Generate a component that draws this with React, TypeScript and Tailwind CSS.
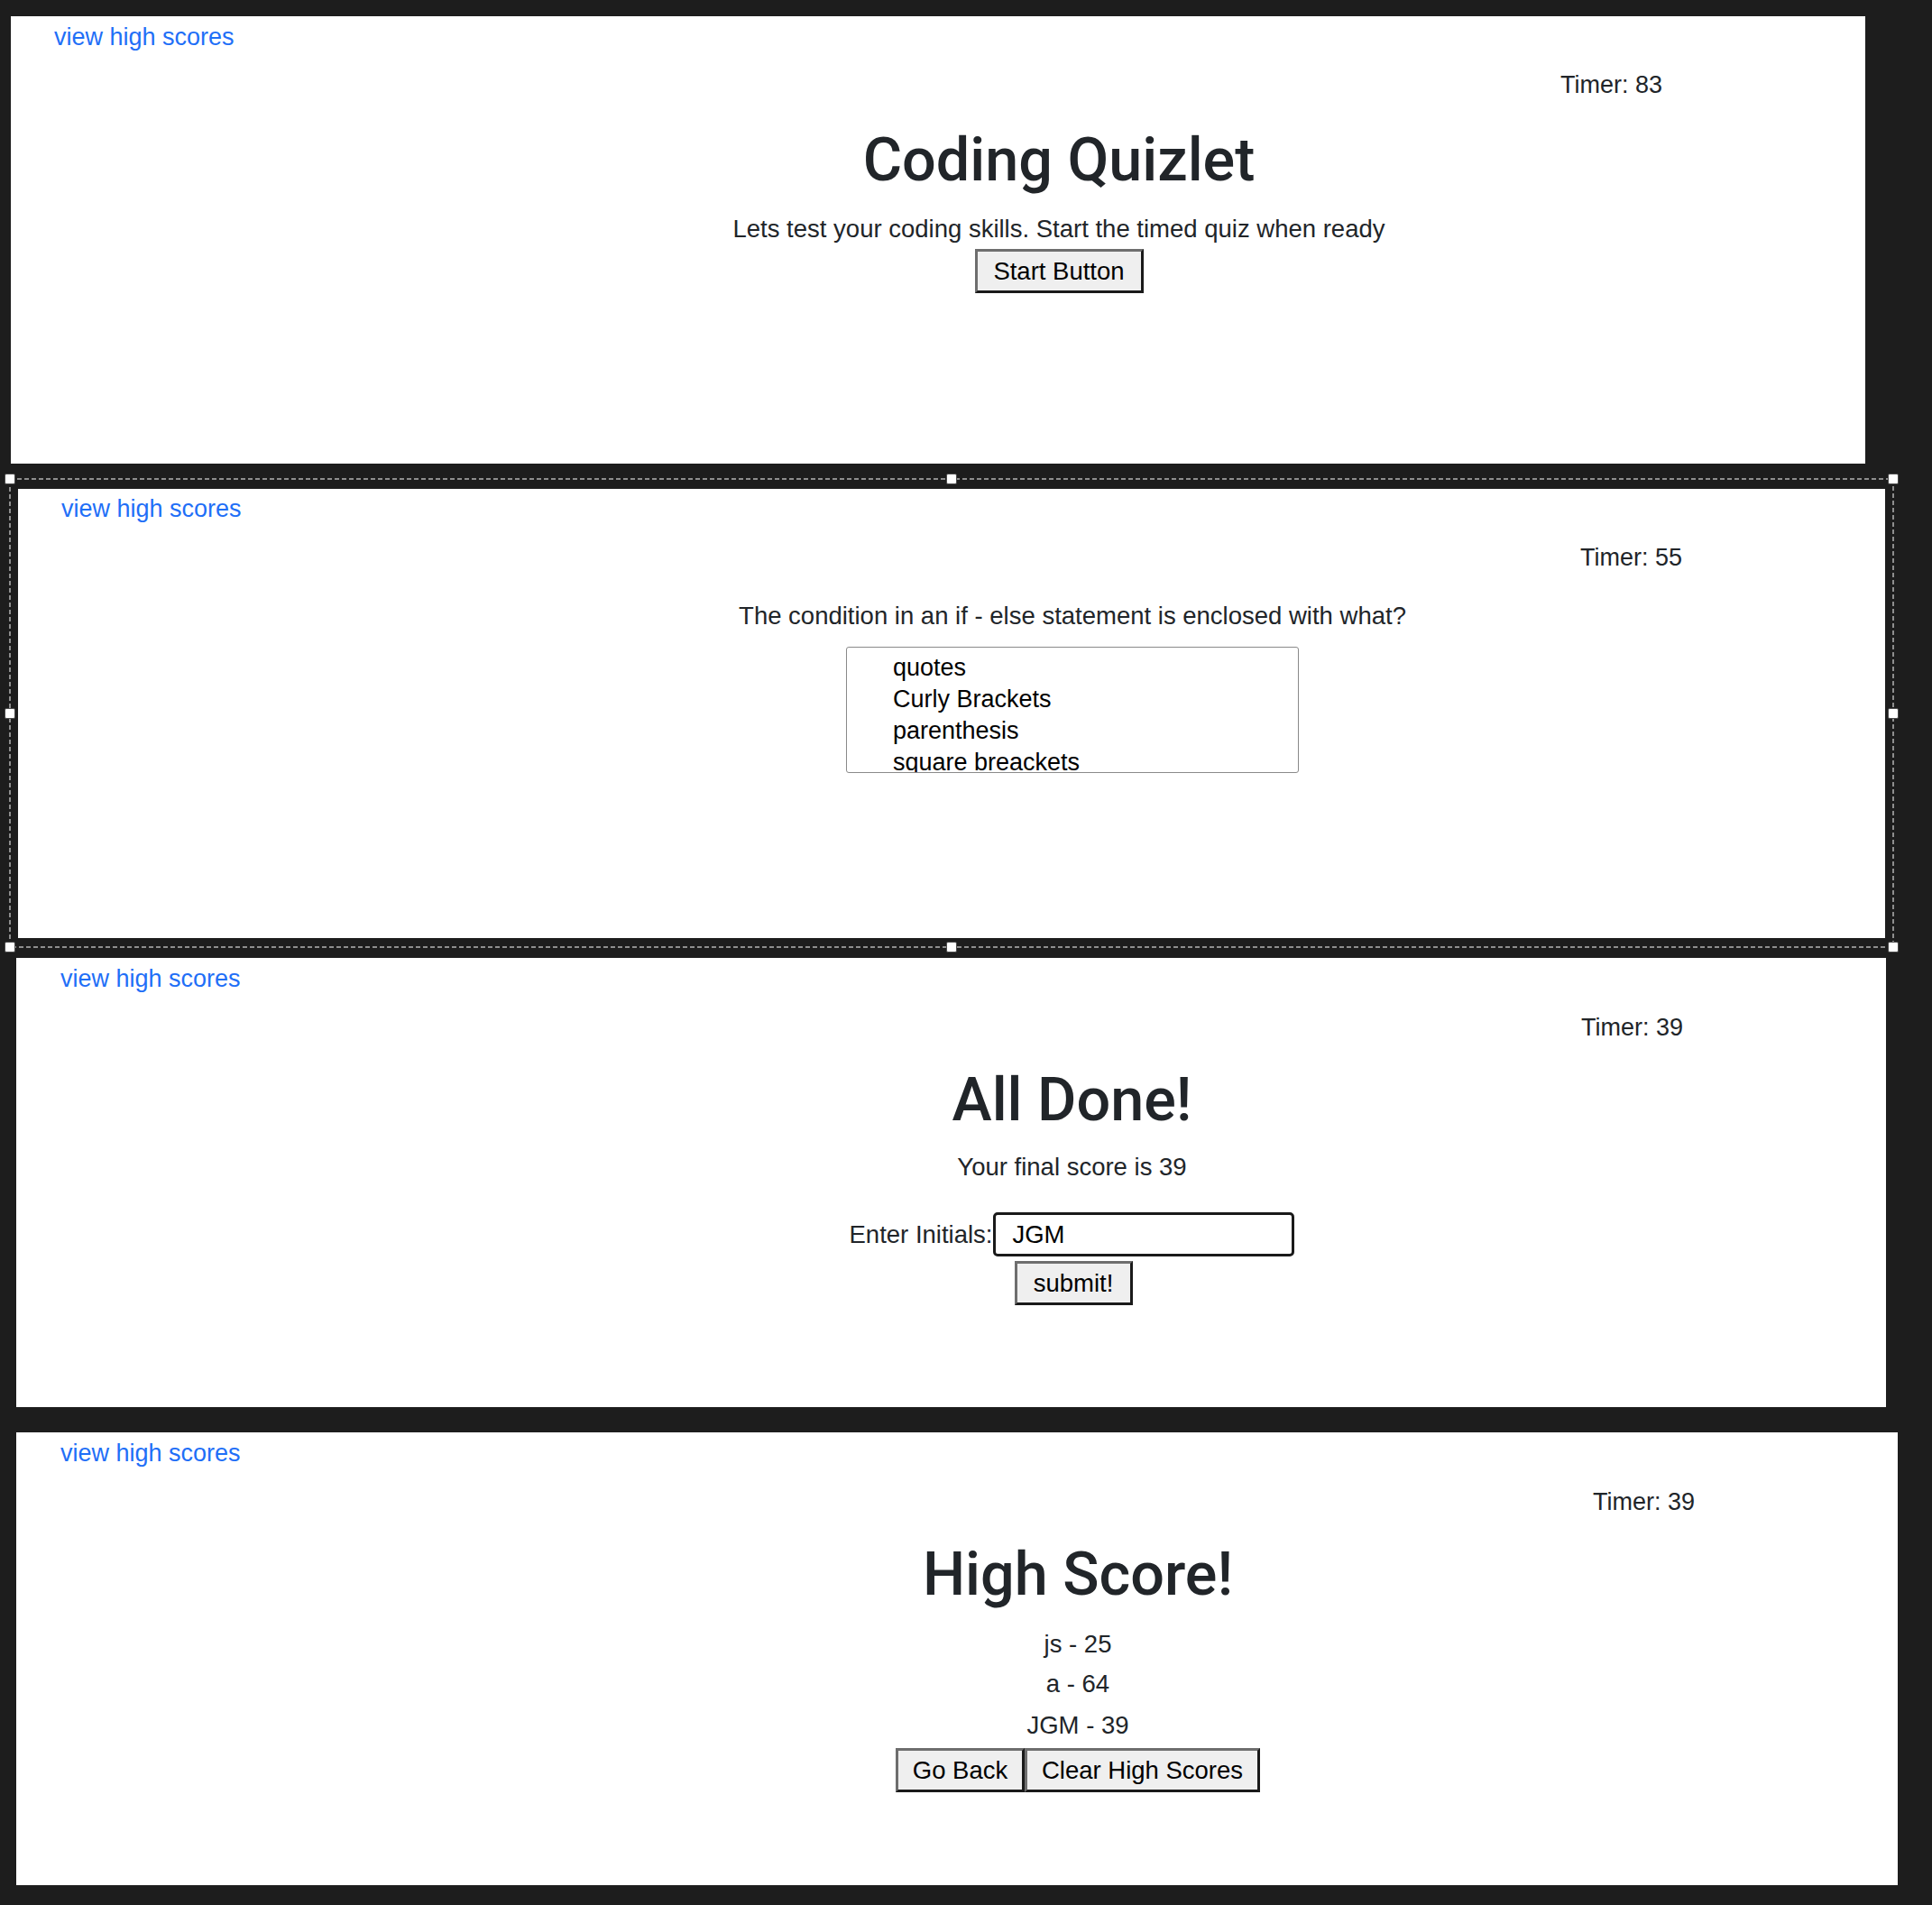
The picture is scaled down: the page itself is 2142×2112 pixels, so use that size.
const font = "font-['Liberation_Sans',Arial,sans-serif]"
const heading = "font-['Roboto','Liberation_Sans',Arial,sans-serif] font-medium text-[66.5px] leading-[72px] text-[#212529]"

function Header({ timer }: { timer: number }) {
  return (
    <>
      <div className="pl-[48px] leading-[32px]">
        <a href="#" className="text-[#1f6ff7] no-underline">
          view high scores
        </a>
      </div>
      <div className="mt-[22px] pr-[225px] text-right leading-[32px]">Timer: {timer}</div>
    </>
  )
}

function Btn({ label, w }: { label: string; w: string }) {
  return (
    <button
      className={`${w} h-[49px] bg-[#efefef] text-black text-[27.5px] leading-none border-[3px] border-t-[#6e6e6e] border-l-[#6e6e6e] border-b-[#1a1a1a] border-r-[#1a1a1a]`}
    >
      {label}
    </button>
  )
}

function StartPanel() {
  return (
    <section className="ml-[12px] w-[2056px] h-[496px] bg-white pt-[7px]">
      <div className="pl-[48px] leading-[32px]">
        <a href="#" className="text-[#1f6ff7]">view high scores</a>
      </div>
      <div className="mt-[21px] pr-[225px] text-right leading-[32px]">Timer: 83</div>
      <main className="pl-[268px] flex flex-col items-center">
        <h1 className={`mt-[31px] ${heading}`}>Coding Quizlet</h1>
        <p className="mt-[25px] leading-[32px] text-[27.5px]">Lets test your coding skills. Start the timed quiz when ready</p>
        <div className="mt-[6px]">
          <Btn label="Start Button" w="w-[187px]" />
        </div>
      </main>
    </section>
  )
}

function Handle({ className }: { className: string }) {
  return (
    <div
      className={`absolute w-[12px] h-[12px] bg-white border border-[#4a4a4a] rounded-[2px] -translate-x-1/2 -translate-y-1/2 ${className}`}
    />
  )
}

function QuestionPanel() {
  const answers = ["quotes", "Curly Brackets", "parenthesis", "square breackets"]
  return (
    <div className="relative mt-[28px] ml-[20px] w-[2070px]">
      <section className="h-[498px] bg-white pt-[6px]">
        <Header timer={55} />
        <main className="pl-[268px] flex flex-col items-center">
          <p className="mt-[33px] leading-[32px] text-[27.5px]">The condition in an if - else statement is enclosed with what?</p>
          <div className="mt-[18px] w-[502px] h-[140px] overflow-hidden border border-[#8a8a8a] rounded-[3px] pl-[51px] pt-[5px] text-black">
            {answers.map((a) => (
              <div key={a} className="leading-[35px] whitespace-nowrap">
                {a}
              </div>
            ))}
          </div>
        </main>
      </section>

      {/* selection marquee */}
      <div className="absolute -left-[9px] -right-[9px] -top-[11px] -bottom-[10px] pointer-events-none">
        <svg className="absolute inset-0 w-full h-full overflow-visible">
          <rect x="0" y="0" width="100%" height="100%" fill="none" stroke="#8e8e8e" strokeWidth="2" strokeDasharray="5 3" />
        </svg>
        <Handle className="left-0 top-0" />
        <Handle className="left-1/2 top-0" />
        <Handle className="left-full top-0" />
        <Handle className="left-0 top-1/2" />
        <Handle className="left-full top-1/2" />
        <Handle className="left-0 top-full" />
        <Handle className="left-1/2 top-full" />
        <Handle className="left-full top-full" />
      </div>
    </div>
  )
}

function DonePanel() {
  return (
    <section className="mt-[22px] ml-[18px] w-[2073px] h-[498px] bg-white pt-[7px]">
      <div className="pl-[1px]">
        <Header timer={39} />
      </div>
      <main className="pl-[268px] flex flex-col items-center">
        <h1 className={`mt-[28px] ${heading}`}>All Done!</h1>
        <p className="mt-[23px] leading-[32px] text-[27.5px]">Your final score is 39</p>
        <div className="mt-[34px] flex items-center">
          <label className="leading-[32px] text-[27.5px]">Enter Initials:</label>
          <input
            defaultValue="JGM"
            className="ml-[1px] w-[334px] h-[49px] border-[3px] border-[#1a1a1a] rounded-[5px] pl-[18px] text-black text-[27.5px] outline-none"
          />
        </div>
        <div className="mt-[5px] pl-[3px]">
          <Btn label="submit!" w="w-[131px]" />
        </div>
      </main>
    </section>
  )
}

function ScoresPanel() {
  return (
    <section className="mt-[28px] ml-[18px] w-[2086px] h-[502px] bg-white pt-[7px]">
      <div className="pl-[1px]">
        <Header timer={39} />
      </div>
      <main className="pl-[268px] flex flex-col items-center text-[27.5px]">
        <h1 className={`mt-[28px] ${heading}`}>High Score!</h1>
        <p className="mt-[26px] leading-[32px]">js - 25</p>
        <p className="mt-[12px] leading-[32px]">a - 64</p>
        <p className="mt-[14px] leading-[32px]">JGM - 39</p>
        <div className="mt-[9px] flex">
          <Btn label="Go Back" w="w-[143px]" />
          <Btn label="Clear High Scores" w="w-[261px]" />
        </div>
      </main>
    </section>
  )
}

export default function App() {
  return (
    <div className={`${font} bg-[#1d1d1d] min-h-[2112px] w-full overflow-hidden pt-[18px] text-[27px] text-[#212529]`}>
      <StartPanel />
      <QuestionPanel />
      <DonePanel />
      <ScoresPanel />
    </div>
  )
}
